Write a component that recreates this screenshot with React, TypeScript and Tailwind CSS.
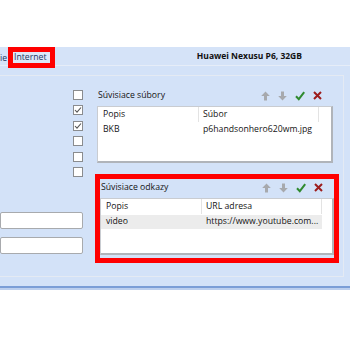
import React from "react";

const F = { fontFamily: '"Open Sans", "Noto Sans", sans-serif' };

function Up() {
  return (
    <svg width="9" height="10" viewBox="0 0 9 10">
      <path d="M4.5 0.5 L8.8 5 L6 5 L6 9.5 L3 9.5 L3 5 L0.2 5 Z" fill="#a7a9ad" />
    </svg>
  );
}
function Down() {
  return (
    <svg width="9" height="10" viewBox="0 0 9 10">
      <path d="M4.5 9.5 L8.8 5 L6 5 L6 0.5 L3 0.5 L3 5 L0.2 5 Z" fill="#a7a9ad" />
    </svg>
  );
}
function Check() {
  return (
    <svg width="10" height="10" viewBox="0 0 10 10">
      <path d="M1 5.2 L3.8 8.2 L9.2 1.2" fill="none" stroke="#2f8a2f" strokeWidth="2" />
    </svg>
  );
}
function Cross() {
  return (
    <svg width="9" height="9" viewBox="0 0 9 9">
      <path d="M1 1 L8 8 M8 1 L1 8" fill="none" stroke="#9c1c1c" strokeWidth="2" />
    </svg>
  );
}

function Icons() {
  return (
    <div className="flex items-center gap-[8px] pr-[11px] pb-[1px]">
      <Up />
      <Down />
      <Check />
      <Cross />
    </div>
  );
}

function Box({ checked }: { checked?: boolean }) {
  return (
    <div className="w-[10px] h-[10px] border border-[#8a8c8f] bg-white flex items-center justify-center">
      {checked && (
        <svg width="8" height="8" viewBox="0 0 8 8">
          <path d="M1 4 L3 6.2 L7 1.5" fill="none" stroke="#555" strokeWidth="1.1" />
        </svg>
      )}
    </div>
  );
}

function Table({ c1, c2, r1, r2, selected }: { c1: string; c2: string; r1: string; r2: string; selected?: boolean }) {
  return (
    <div className="bg-white border border-[#c9ccd1] border-r-2 border-b-2 border-r-[#b0b4ba] border-b-[#b0b4ba] h-[57px]">
      <div className="flex h-[15px] items-center">
        <div className="w-[101px] h-full border-r border-[#e3e3e3] pl-[5px] flex items-center">{c1}</div>
        <div className="w-[120px] h-full border-r border-[#e3e3e3] pl-[4px] flex items-center">{c2}</div>
      </div>
      <div className={`flex h-[14px] items-center mt-[1px] w-[221px] ${selected ? "bg-[#ececec]" : ""}`}>
        <div className="w-[101px] pl-[5px]">{r1}</div>
        <div className="w-[120px] pl-[4px] whitespace-nowrap">{r2}</div>
      </div>
    </div>
  );
}

export default function App() {
  return (
    <div className="w-[350px] h-[350px] bg-white overflow-hidden text-[8.7px] text-[#141414]" style={F}>
      <div className="h-[47px]" />
      <div className="h-[19px] bg-[#d5e3f8] border-b border-[#e6edf8] flex items-start overflow-visible">
        <span className="w-[8px] mt-[5px] text-[#1e355f] whitespace-nowrap">ie</span>
        <div className="relative z-10 h-[21px] w-[47px] border-[5px] border-[#ff0000] bg-[#dde8f8] flex items-center pl-[1px]">
          <span className="text-[#1e355f]">Internet</span>
        </div>
        <div className="flex-1" />
        <span className="mt-[3px] mr-[48px] font-bold text-[8.5px] text-[#111]">Huawei Nexusu P6, 32GB</span>
      </div>
      <div className="bg-[#d3e2f8]">
        <div className="h-[9px]" />
        <div className="w-[344px] h-[202px] border-t border-r border-b border-[#e4eaf3] flex">
          <div className="w-[83px] flex flex-col items-end">
            <div className="h-[14px]" />
            <div className="flex flex-col gap-[5.4px]">
              <Box />
              <Box checked />
              <Box checked />
              <Box />
              <Box />
              <Box />
            </div>
            <div className="h-[35px]" />
            <div className="w-full flex flex-col gap-[8px]">
              <div className="h-[17px] bg-white border border-[#a8aaad] rounded-[2px]" />
              <div className="h-[17px] bg-white border border-[#a8aaad] rounded-[2px]" />
            </div>
          </div>
          <div className="ml-[14px] w-[236px] flex flex-col">
            <div className="h-[11px]" />
            <div className="h-[19px] pb-[1px] pl-[1px] flex items-center justify-between">
              <span>Súvisiace súbory</span>
              <Icons />
            </div>
            <Table c1="Popis" c2="Súbor" r1="BKB" r2="p6handsonhero620wm.jpg" />
            <div className="h-[11px]" />
            <div className="-ml-[2px] w-[244px] border-[5px] border-[#ff0000] h-[89px]">
              <div className="h-[19px] pb-[1px] pl-[1px] flex items-center justify-between">
                <span>Súvisiace odkazy</span>
                <Icons />
              </div>
              <Table c1="Popis" c2="URL adresa" r1="video" r2="https://www.youtube.com..." selected />
            </div>
          </div>
        </div>
        <div className="h-[9px]" />
        <div className="h-[2px] bg-[#7b9ed7]" />
        <div className="h-[2px] bg-[#bccfee]" />
      </div>
    </div>
  );
}
